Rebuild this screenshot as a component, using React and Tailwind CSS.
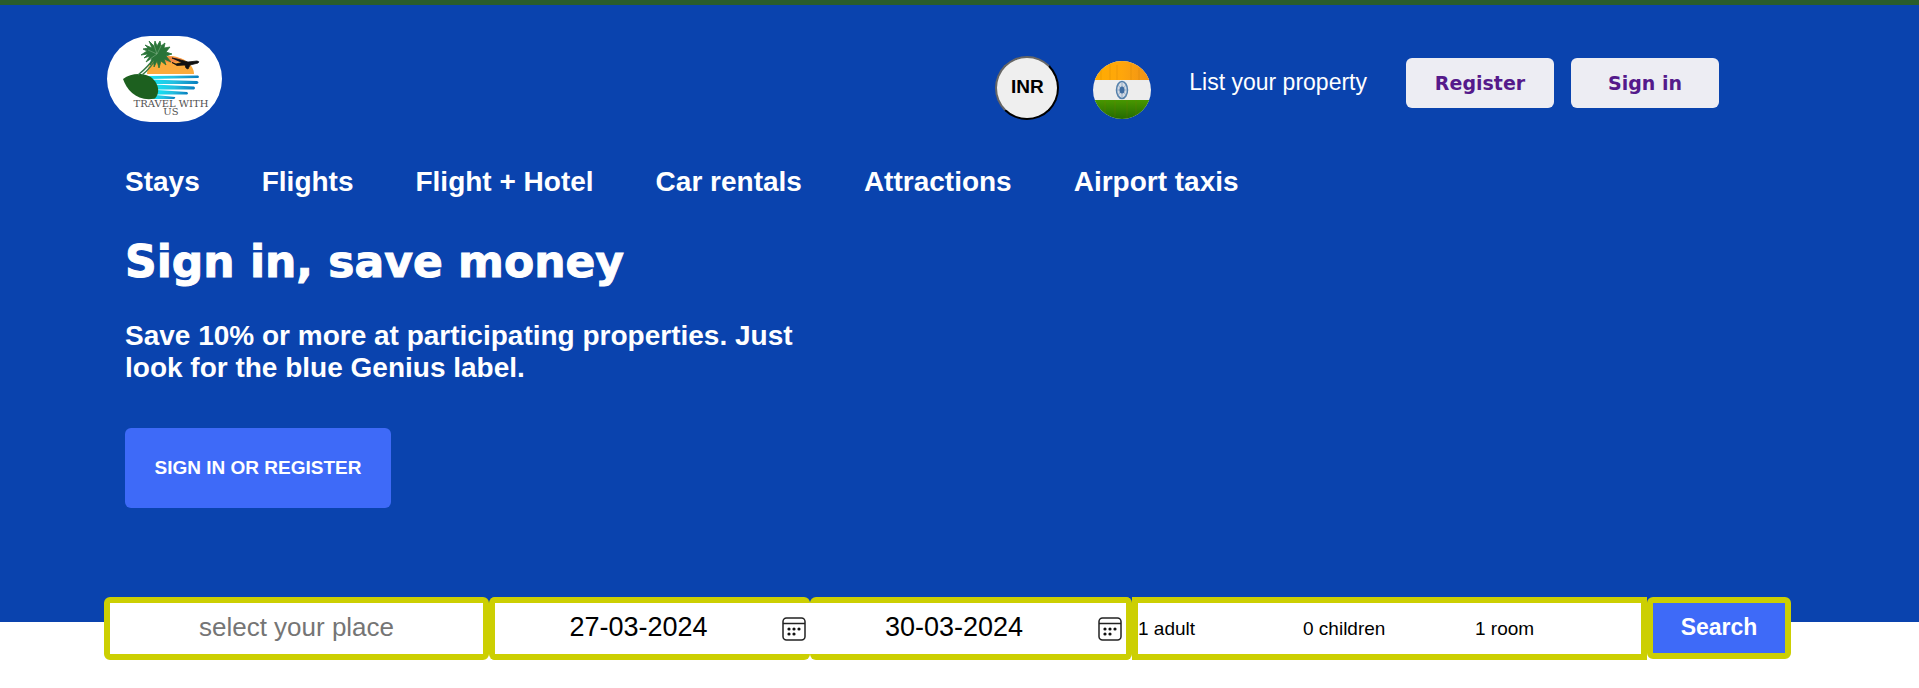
const navItems = ["Stays", "Flights", "Flight + Hotel", "Car rentals", "Attractions", "Airport taxis"];

function Logo() {
  return (
    <svg viewBox="0 0 115 86" className="h-[86px] w-[115px]" role="img" aria-label="Travel with us">
      <rect width="115" height="86" rx="43" fill="#fff" />
      <path d="M40 38C40 27 49 20 62 20S87 28 87 38Z" fill="#fbab3c" />
      <path d="M49 24Q62 17 77 24L65 27Z" fill="#f58a45" />
      <defs>
        <linearGradient id="sea" x1="0" x2="1">
          <stop offset="0" stopColor="#12e5f5" />
          <stop offset=".5" stopColor="#25bfe0" />
          <stop offset="1" stopColor="#087dbd" />
        </linearGradient>
      </defs>
      <g fill="url(#sea)">
        <path d="M40 40L91 39.500Q93 41 91 42L43 43Z" />
        <path d="M42 43.500L90 45Q93 46.500 90 48L47 48Z" />
        <path d="M47 48.500L87 50.500Q89 52 87 53.500L50 53.500Z" />
        <path d="M50 54L80 56Q82 57.500 80 58.500L50 58.500Z" />
        <path d="M49 59L68 61Q69 62 67 63L45 63Z" />
      </g>
      <path d="M16 43C25 36 40 37 46 43C52 49 53 57 48 62.500C31 66 20 55 16 43Z" fill="#1d601f" />
      <path d="M31 39Q41 31 49 20M35 39Q44 32 50 21" stroke="#397c48" strokeWidth="1.500" fill="none" />
      <g fill="#2a7438" stroke="#2a7438" strokeWidth=".8" strokeLinejoin="round">
        <path d="M50 18L45 12L38 9L41 12L36 13L40 15L34 19L41 18L37 22L43 20L39 26L45 22L43 29L47 24L47 31L50 25L52 32L54 25L59 29L57 23L64 26L59 20L65 18L59 16L63 11L57 12L58 7L54 10L53 5L50 10L48 5L47 10L42 5L45 12Z" />
      </g>
      <path d="M50 18L41 14M50 18L43 23M50 18L47 9M50 18L54 10" stroke="#8fba93" strokeWidth=".5" />
      <path d="M65 26.500L69 28L75 26.500L65 22L70 23L81 26L90 25Q93 25.500 91 27L83 29L81 33L79 32L78 29L70 29.500Z" fill="#111" stroke="#111" strokeWidth=".8" />
      <g fill="#505050" fontFamily="DejaVu Serif, serif" fontSize="10" textAnchor="middle">
        <text x="64" y="71">TRAVEL WITH</text>
        <text x="64" y="79">US</text>
      </g>
    </svg>
  );
}

function Flag() {
  return (
    <svg viewBox="0 0 58 58" className="size-[58px]" aria-hidden="true">
      <defs>
        <clipPath id="disc"><circle cx="29" cy="29" r="29" /></clipPath>
        <linearGradient id="saffron">
          <stop offset="0" stopColor="#ffad00" />
          <stop offset=".5" stopColor="#ffa60b" />
          <stop offset="1" stopColor="#ee9018" />
        </linearGradient>
        <linearGradient id="green" x2="0" y2="1">
          <stop offset="0" stopColor="#489700" />
          <stop offset="1" stopColor="#246b00" />
        </linearGradient>
      </defs>
      <g clipPath="url(#disc)">
        <rect width="58" height="58" fill="#ededed" />
        <rect width="58" height="19" fill="url(#saffron)" />
        <rect y="39" width="58" height="19" fill="url(#green)" />
        <path d="M8 5V19M17 2V19M24 4V19M38 3V19M46 7V19M12 40V52M22 40V56M34 40V57M43 40V54" stroke="#a96b00" strokeOpacity=".18" />
      </g>
      <ellipse cx="29" cy="29" rx="5.500" ry="8.500" fill="#d3dae3" stroke="#5480ab" strokeWidth="1.500" />
      <path d="M29 22V36M24 29H34M25 24L33 34M33 24L25 34" stroke="#7f9dbd" strokeWidth=".7" />
      <ellipse cx="29" cy="29" rx="2.500" ry="3.500" fill="#3f6c9f" />
    </svg>
  );
}

function CalendarIcon() {
  return (
    <svg viewBox="0 0 24 24" className="size-6" fill="none" stroke="#222" strokeWidth="1.500" aria-hidden="true">
      <rect x="1" y="1" width="22" height="22" rx="3.500" />
      <path d="M1 6.500H23" />
      <g fill="#111" stroke="none">
        <circle cx="7" cy="12" r="1.600" />
        <circle cx="12" cy="12" r="1.600" />
        <circle cx="17" cy="12" r="1.600" />
        <circle cx="7" cy="17" r="1.600" />
        <circle cx="12" cy="17" r="1.600" />
      </g>
    </svg>
  );
}

function DateField({ label, value, className }) {
  return (
    <div className={`flex min-w-0 items-center rounded-md border-[6px] border-[#cccf02] bg-white ${className}`}>
      <input aria-label={label} defaultValue={value} className="h-full min-w-0 flex-1 pb-0.5 text-center text-[27px] text-black outline-none" />
      <button type="button" aria-label={`Open calendar for ${label}`} className="mr-1 shrink-0">
        <CalendarIcon />
      </button>
    </div>
  );
}

export default function App() {
  return (
    <div className="font-['Liberation_Sans',Arial,sans-serif]">
      <header className="border-t-[5px] border-[#2a5d2b] bg-[#0a43ae] pb-[114px] text-white">
        <div className="flex items-start pt-[31px] pr-[200px] pl-[107px]">
          <a href="#home" className="shrink-0"><Logo /></a>
          <div className="ml-auto flex items-start">
            <button type="button" className="mt-5 size-16 rounded-full border-2 border-t-[#666] border-r-black border-b-black border-l-[#666] bg-[#efefef] pb-0.5 text-[19px] font-bold text-black">INR</button>
            <button type="button" aria-label="Country: India" className="mt-[25px] ml-[34px]"><Flag /></button>
            <a href="#list" className="mt-8 ml-[38px] text-[23px] leading-[28px] whitespace-nowrap">List your property</a>
            <a href="#register" className="mt-[22px] ml-[39px] flex h-[50px] w-[148px] items-center justify-center rounded-md bg-[#ededf3] font-['DejaVu_Sans',sans-serif] text-[19px] font-bold text-[#551a8b]">Register</a>
            <a href="#signin" className="mt-[22px] ml-[17px] flex h-[50px] w-[148px] items-center justify-center rounded-md bg-[#ededf3] font-['DejaVu_Sans',sans-serif] text-[19px] font-bold text-[#551a8b]">Sign in</a>
          </div>
        </div>
        <nav className="mt-11 flex gap-[62px] px-[125px] text-[28px] leading-[32px] font-bold whitespace-nowrap">
          {navItems.map((item) => (
            <a key={item} href="#nav">{item}</a>
          ))}
        </nav>
        <section className="px-[125px]">
          <h1 className="mt-[34px] font-['DejaVu_Sans',sans-serif] text-[44px] leading-[60px] font-bold [-webkit-text-stroke:1px_white]">Sign in, save money</h1>
          <p className="mt-7 max-w-[680px] text-[28px] leading-[32px] font-bold">
            Save 10% or more at participating properties. Just look for the blue Genius label.
          </p>
          <button type="button" className="mt-11 h-20 w-[266px] rounded-md bg-[#3e6af8] text-[19px] font-bold">SIGN IN OR REGISTER</button>
        </section>
      </header>
      <form className="-mt-[25px] mr-[128px] ml-[104px] grid h-[63px] grid-cols-[385fr_321fr_322fr_515fr_144fr]" onSubmit={(e) => e.preventDefault()}>
        <input aria-label="Destination" placeholder="select your place" className="min-w-0 rounded-md border-[6px] border-[#cccf02] bg-white pb-0.5 text-center text-[26px] text-black outline-none placeholder:text-[#757575]" />
        <DateField label="check-in" value="27-03-2024" className="border-r-0" />
        <DateField label="check-out" value="30-03-2024" className="border-l-0" />
        <button type="button" className="grid min-w-0 grid-cols-[165px_172px_1fr] items-center border-[6px] border-[#cccf02] bg-white pt-0.5 text-left text-[19px] text-black">
          <span>1 adult</span>
          <span>0 children</span>
          <span>1 room</span>
        </button>
        <button type="submit" className="mb-px rounded-md border-[6px] border-[#cccf02] bg-[#3e6af8] pb-0.5 text-[23px] font-bold text-white">Search</button>
      </form>
    </div>
  );
}
